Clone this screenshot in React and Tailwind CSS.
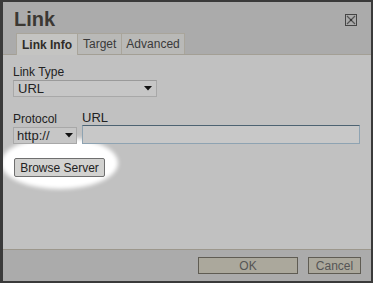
import React from "react";

const font = { fontFamily: '"Liberation Sans", Arial, sans-serif' };

const Arrow = () => (
  <svg width="8" height="5" viewBox="0 0 8 5" className="shrink-0">
    <path d="M0 0h8L4 4.5z" fill="#111" />
  </svg>
);

export default function App() {
  return (
    <div
      className="w-[373px] h-[283px] bg-[#3a3a3a] p-[2px] pl-[3px]"
      style={font}
    >
      <div className="w-full h-full flex flex-col bg-[#c1c1c1] overflow-hidden">
        {/* title + tabs */}
        <div className="bg-[#ababab] border-b border-[#a39f95] h-[53px] flex flex-col">
          <div className="flex items-start justify-between pl-[11px] pr-[14px] pt-[5px] h-[30px]">
            <span className="text-[20px] font-bold text-[#3b3833] leading-[24px]">
              Link
            </span>
            <div className="mt-[7px] w-[12px] h-[12px] border border-[#444] flex items-center justify-center">
              <svg width="10" height="10" viewBox="0 0 10 10">
                <path d="M1 1L9 9M9 1L1 9" stroke="#555" strokeWidth="1.2" />
                <rect x="4" y="4" width="2" height="2" fill="#333" />
              </svg>
            </div>
          </div>
          <div className="flex items-end pl-[13px] h-[23px] text-[12px] text-[#3a3a3a]">
            <div className="px-[5px] flex items-center bg-[#c4c4c2] border border-b-0 border-[#a9a59b] font-bold text-[#2f2c28] mb-[-1px] h-[22px]">
              Link Info
            </div>
            <div className="h-[21px] px-[5px] flex items-center bg-[#b9b9b7] border border-b-0 border-l-0 border-[#a9a59b]">
              Target
            </div>
            <div className="h-[21px] px-[4px] flex items-center bg-[#b9b9b7] border border-b-0 border-l-0 border-[#a9a59b]">
              Advanced
            </div>
          </div>
        </div>

        {/* content */}
        <div className="relative flex-1 pl-[10px] pr-[11px] pt-[11px] text-[12px] text-[#222]">
          <div className="absolute left-[-2px] top-[82px] w-[117px] h-[52px] rounded-[50%] bg-white blur-[2px]" />
          <div className="relative">
            <div className="leading-[13px]">Link Type</div>
            <div className="w-[144px] h-[17px] mt-[1px] bg-[#c6c6c6] border border-[#a8a8a8] border-t-[#9a9a9a] flex items-center justify-between pl-[4px] pr-[4px]">
              <span className="text-[13px]">URL</span>
              <Arrow />
            </div>

            <div className="flex gap-[5px] mt-[14px]">
              <div>
                <div className="leading-[13px] mt-[2px]">Protocol</div>
                <div className="w-[64px] h-[17px] mt-[1px] bg-[#c6c6c6] border border-[#a8a8a8] flex items-center justify-between pl-[3px] pr-[3px]">
                  <span className="text-[13px]">http://</span>
                  <Arrow />
                </div>
              </div>
              <div className="flex-1">
                <div className="leading-[13px] text-[13px]">URL</div>
                <div className="h-[19px] mt-[1px] bg-[#c8c8c8] border border-[#8ea3b2] border-t-[#4d6372] border-l-[#8ea3b2]" />
              </div>
            </div>

            <div className="mt-[14px] ml-[1px] w-[91px] h-[19px] bg-[#d2d2d0] border border-[#6f6f6f] rounded-[2px] flex items-center justify-center text-[12px] text-[#222]">
              Browse Server
            </div>
          </div>
        </div>

        {/* footer */}
        <div className="h-[32px] bg-[#ababab] border-t border-[#9c978c] flex items-start justify-end gap-[10px] pr-[10px] pt-[7px] text-[12px] text-[#555]">
          <div className="w-[100px] h-[17px] bg-[#aba89c] border border-[#5f5c53] flex items-center justify-center">
            OK
          </div>
          <div className="w-[53px] h-[17px] bg-[#aba89c] border border-[#5f5c53] flex items-center justify-center">
            Cancel
          </div>
        </div>
      </div>
    </div>
  );
}
